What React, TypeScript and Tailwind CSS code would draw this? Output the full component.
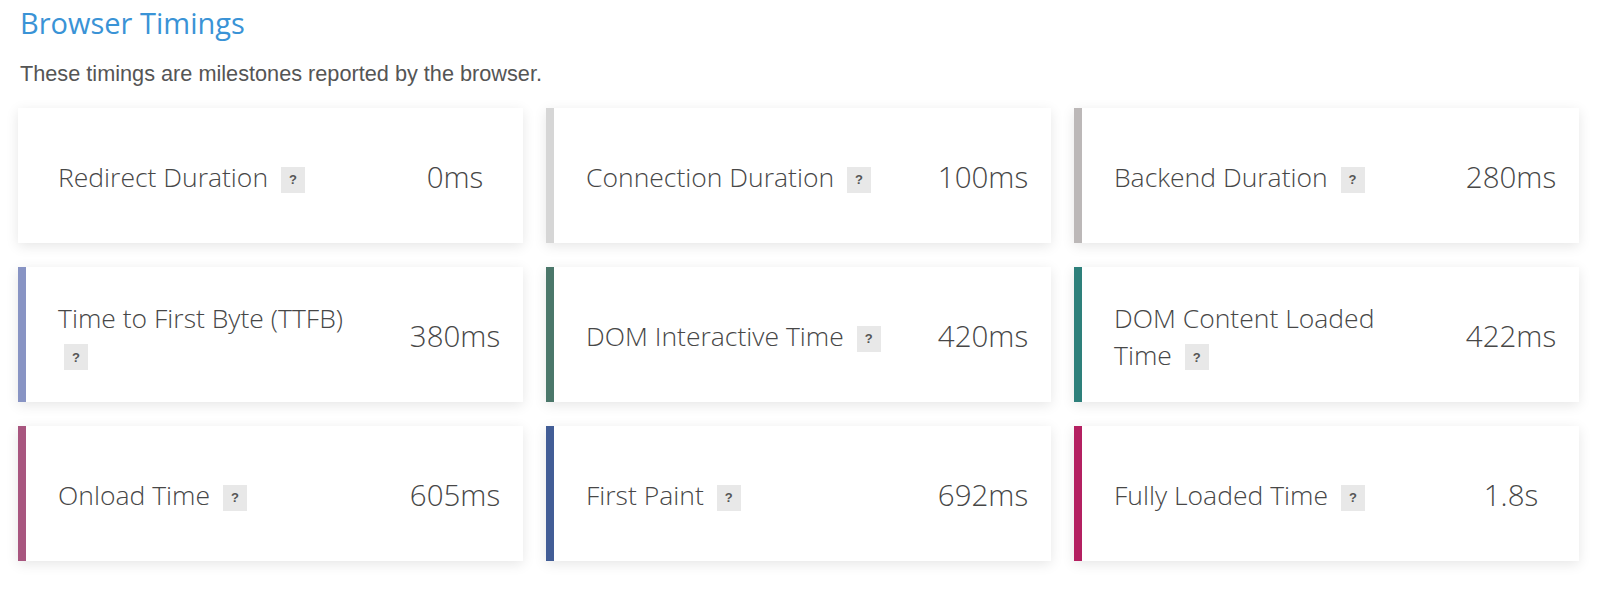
import React from "react";

type Timing = {
  label: string;
  value: string;
  bar: string;
};

const timings: Timing[] = [
  { label: "Redirect Duration", value: "0ms", bar: "border-l-white" },
  { label: "Connection Duration", value: "100ms", bar: "border-l-[#d6d6d6]" },
  { label: "Backend Duration", value: "280ms", bar: "border-l-[#bcb8b8]" },
  { label: "Time to First Byte (TTFB)", value: "380ms", bar: "border-l-[#8894c4]" },
  { label: "DOM Interactive Time", value: "420ms", bar: "border-l-[#4b776a]" },
  { label: "DOM Content Loaded Time", value: "422ms", bar: "border-l-[#2e807b]" },
  { label: "Onload Time", value: "605ms", bar: "border-l-[#a8567f]" },
  { label: "First Paint", value: "692ms", bar: "border-l-[#425d96]" },
  { label: "Fully Loaded Time", value: "1.8s", bar: "border-l-[#b42061]" },
];

const HelpBadge = () => (
  <span className="ml-[6px] inline-flex h-[26px] w-[24px] items-center justify-center bg-[#e8e8e8] align-middle font-['Liberation_Sans',sans-serif] text-[13px] font-bold leading-none text-[#555]">
    ?
  </span>
);

const TimingCard = ({ timing }: { timing: Timing }) => {
  const words = timing.label.split(" ");
  const last = words.pop();
  return (
    <div
      className={`flex h-[135px] items-center border-l-[8px] bg-white shadow-[0_3px_12px_rgba(0,0,0,0.1)] ${timing.bar}`}
    >
      <div className="flex-1 pl-[32px] pt-[4px]">
        <div className="max-w-[310px] text-[26.5px] font-light leading-[37px] text-[#474747]">
          {words.join(" ")} <span className="whitespace-nowrap">{last}</span>{" "}
          <HelpBadge />
        </div>
      </div>
      <div className="w-[136px] pt-[4px] text-center text-[29.5px] font-light text-[#474747]">
        {timing.value}
      </div>
    </div>
  );
};

export default function App() {
  return (
    <div className="min-h-screen bg-white pl-[18px] pr-[21px] pt-[3px] font-['Open_Sans',sans-serif]">
      <h2 className="pl-[2px] text-[29px] font-normal leading-[40px] text-[#3a93d6]">
        Browser Timings
      </h2>
      <p className="mt-[18px] pl-[2px] font-['Liberation_Sans',Arial,sans-serif] text-[21.7px] leading-[26px] text-[#555]">
        These timings are milestones reported by the browser.
      </p>
      <div className="mt-[21px] grid grid-cols-3 gap-x-[23px] gap-y-[24px]">
        {timings.map((t) => (
          <TimingCard key={t.label} timing={t} />
        ))}
      </div>
    </div>
  );
}
